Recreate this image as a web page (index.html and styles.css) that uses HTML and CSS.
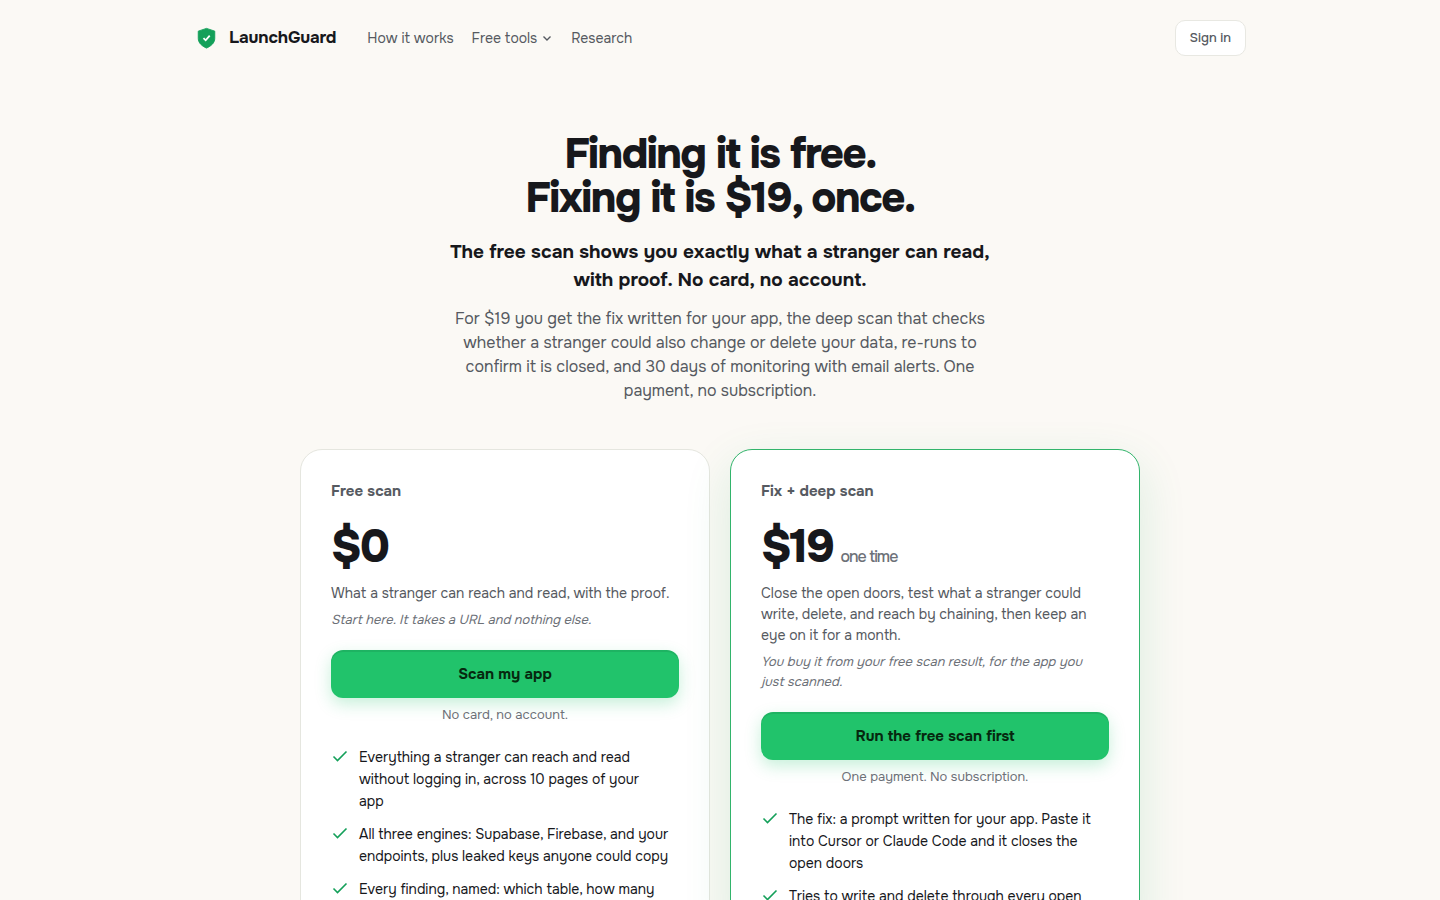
FILE: index.html
```html
<!DOCTYPE html>
<html lang="en">
<head>
    <meta charset="UTF-8">
    <meta name="viewport" content="width=device-width, initial-scale=1.0">
    <title>Pricing - LaunchGuard</title>
    <link rel="stylesheet" href="styles.css">
</head>
<body>
    <header class="site_header">
        <a class="brand" href="#">
            <svg class="brand_icon" viewBox="0 0 24 24" aria-hidden="true">
                <path d="M12 1.500 21 4.500v8c0 4.800-4 8.300-9 10.500C7 20.800 3 17.300 3 12.500v-8z" fill="#14a05a" stroke="#14a05a" stroke-linejoin="round"/>
                <path d="m8.700 12.200 2.400 2.300 4.400-5" fill="none" stroke="#fff" stroke-width="2"/>
            </svg>
            <span>LaunchGuard</span>
        </a>
        <nav class="site_nav">
            <a href="#">How it works</a>
            <button type="button" class="nav_menu">
                Free tools
                <svg class="chevron" viewBox="0 0 12 12" aria-hidden="true">
                    <path d="m2.500 4.500 3.500 3.500 3.500-3.500" fill="none" stroke="currentColor" stroke-width="1.400"/>
                </svg>
            </button>
            <a href="#">Research</a>
        </nav>
        <a class="sign_in" href="#">Sign in</a>
    </header>

    <main>
        <!-- Intro -->
        <section class="intro">
            <h1>Finding it is free.<br>Fixing it is $19, once.</h1>
            <p class="lead">The free scan shows you exactly what a stranger can read, with proof. No card, no account.</p>
            <p class="summary">For $19 you get the fix written for your app, the deep scan that checks whether a stranger could also change or delete your data, re-runs to confirm it is closed, and 30 days of monitoring with email alerts. One payment, no subscription.</p>
        </section>

        <!-- Plans -->
        <div class="plans">
            <section class="plan">
                <h2>Free scan</h2>
                <p class="price">$0</p>
                <p class="about">What a stranger can reach and read, with the proof.</p>
                <p class="note">Start here. It takes a URL and nothing else.</p>
                <button type="button" class="plan_button">Scan my app</button>
                <p class="terms">No card, no account.</p>
                <ul class="features">
                    <li>
                        <svg class="check" viewBox="0 0 18 18" aria-hidden="true"><path d="m2.500 9.500 4 4 9-9"/></svg>
                        <span>Everything a stranger can reach and read without logging in, across 10 pages of your<br>app</span>
                    </li>
                    <li>
                        <svg class="check" viewBox="0 0 18 18" aria-hidden="true"><path d="m2.500 9.500 4 4 9-9"/></svg>
                        <span>All three engines: Supabase, Firebase, and your endpoints, plus leaked keys anyone could copy</span>
                    </li>
                    <li>
                        <svg class="check" viewBox="0 0 18 18" aria-hidden="true"><path d="m2.500 9.500 4 4 9-9"/></svg>
                        <span>Every finding, named: which table, how many</span>
                    </li>
                </ul>
            </section>

            <section class="plan featured">
                <h2>Fix + deep scan</h2>
                <p class="price">$19 <small>one time</small></p>
                <p class="about">Close the open doors, test what a stranger could write, delete, and reach by chaining, then keep an eye on it for a month.</p>
                <p class="note">You buy it from your free scan result, for the app you just scanned.</p>
                <button type="button" class="plan_button">Run the free scan first</button>
                <p class="terms">One payment. No subscription.</p>
                <ul class="features">
                    <li>
                        <svg class="check" viewBox="0 0 18 18" aria-hidden="true"><path d="m2.500 9.500 4 4 9-9"/></svg>
                        <span>The fix: a prompt written for your app. Paste it into Cursor or Claude Code and it closes the open doors</span>
                    </li>
                    <li>
                        <svg class="check" viewBox="0 0 18 18" aria-hidden="true"><path d="m2.500 9.500 4 4 9-9"/></svg>
                        <span>Tries to write and delete through every open</span>
                    </li>
                </ul>
            </section>
        </div>
    </main>
</body>
</html>
```
FILE: styles.css
```css
* {
    box-sizing: border-box;
}

body {
    font-family: Onest, Inter, "Liberation Sans", sans-serif;
    background-color: #fbf9f5;
    color: #17181c;
    margin: 0;
}

h1, h2, p, ul {
    margin: 0;
    padding: 0;
}

a {
    color: inherit;
    text-decoration: none;
}

button {
    font-family: inherit;
    cursor: pointer;
}

.site_header {
    display: flex;
    align-items: center;
    max-width: 1100px;
    margin: 0 auto;
    padding: 20px 24px;
}

.brand {
    display: flex;
    align-items: center;
    gap: 10px;
    font-size: 17px;
    font-weight: 700;
    line-height: 20px;
    letter-spacing: -0.01em;
}

.brand_icon {
    width: 25px;
    height: 22px;
}

.site_nav {
    display: flex;
    align-items: center;
    gap: 18px;
    margin-left: 31px;
    font-size: 14px;
    line-height: 20px;
    color: #565a61;
}

.nav_menu {
    display: flex;
    align-items: center;
    gap: 4px;
    padding: 0;
    border: 0;
    background: none;
    color: inherit;
    font-size: 14px;
    line-height: 20px;
}

.chevron {
    width: 12px;
    height: 12px;
}

.sign_in {
    margin-left: auto;
    padding: 8px 14px;
    border: 1px solid #e8e8e2;
    border-radius: 10px;
    background-color: #fff;
    color: #565a61;
    font-size: 13px;
    font-weight: 500;
    line-height: 18px;
}

.intro {
    max-width: 560px;
    margin: 0 auto;
    padding-top: 56px;
    text-align: center;
}

.intro h1 {
    font-size: 42px;
    font-weight: 800;
    line-height: 44px;
    letter-spacing: -0.035em;
}

.lead {
    margin-top: 18px;
    font-size: 19px;
    font-weight: 700;
    line-height: 28px;
}

.summary {
    margin-top: 13px;
    padding: 0 10px;
    font-size: 16px;
    line-height: 24px;
    color: #565a61;
}

.plans {
    display: grid;
    grid-template-columns: 1fr 1fr;
    gap: 20px;
    max-width: 840px;
    margin: 46px auto 64px;
}

.plan {
    padding: 30px;
    border: 1px solid #e5e6df;
    border-radius: 22px;
    background-color: #fff;
}

.featured {
    border-color: #32b46b;
    box-shadow: 0 16px 48px rgba(20, 160, 90, 0.14);
}

.plan h2 {
    font-size: 15px;
    font-weight: 700;
    line-height: 22px;
    color: #565a61;
}

.price {
    margin-top: 21px;
    font-size: 46px;
    font-weight: 800;
    line-height: 48px;
    letter-spacing: -0.04em;
}

.price small {
    margin-left: -4px;
    font-size: 16px;
    font-weight: 500;
    line-height: 16px;
    letter-spacing: -0.06em;
    color: #6d7178;
}

.about {
    margin-top: 12px;
    font-size: 14px;
    line-height: 21px;
    color: #565a61;
}

.note {
    margin-top: 6px;
    padding-right: 10px;
    font-size: 13px;
    font-style: italic;
    line-height: 20px;
    color: #6d7178;
}

.plan_button {
    width: 100%;
    height: 48px;
    margin-top: 20px;
    border: 0;
    border-radius: 12px;
    background-color: #21c36b;
    box-shadow: inset 0 2px 0 rgba(0, 0, 0, 0.08), 0 6px 16px rgba(33, 195, 107, 0.25);
    color: #06280f;
    font-size: 15px;
    font-weight: 700;
}

.terms {
    margin-top: 8px;
    font-size: 13px;
    line-height: 18px;
    text-align: center;
    color: #6d7178;
}

.features {
    display: grid;
    gap: 11px;
    margin-top: 22px;
    list-style: none;
    font-size: 14px;
    line-height: 22px;
}

.features li {
    display: flex;
    gap: 10px;
}

.check {
    flex: none;
    width: 18px;
    height: 18px;
    margin-top: 1px;
    fill: none;
    stroke: #14a05a;
    stroke-width: 1.6;
}
```
